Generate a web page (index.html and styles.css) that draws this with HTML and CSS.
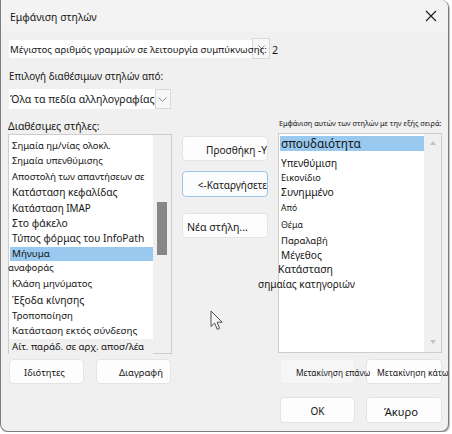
FILE: index.html
```html
<!DOCTYPE html>
<html lang="el">
<head>
<meta charset="utf-8">
<title>Εμφάνιση στηλών</title>
<link rel="stylesheet" href="styles.css">
</head>
<body>
<div class="window">
  <header class="titlebar">
    <span class="title">Εμφάνιση στηλών</span>
    <svg class="close" width="12" height="12" viewBox="0 0 12 12"><path d="M1 1L11 11M11 1L1 11" stroke="#1a1a1a" stroke-width="1.1"/></svg>
  </header>
  <main class="content">
    <div class="maxrow">
      <span class="maxlabel">Μέγιστος αριθμός γραμμών σε λειτουργία συμπύκνωσης:</span>
      <span class="spin"><svg width="7" height="7" viewBox="0 0 7 7"><path d="M0.5 0.5L3.5 3.5L6.5 0.5M3.5 3.5V7" stroke="#9088a8" fill="none"/></svg></span>
      <span class="maxval">2</span>
    </div>
    <div class="lbl-from">Επιλογή διαθέσιμων στηλών από:</div>
    <div class="dropdown">
      <span class="dd-text">Όλα τα πεδία αλληλογραφίας</span>
      <span class="dd-btn"><svg width="9" height="5" viewBox="0 0 9 5"><path d="M0.5 0.5L4.5 4.5L8.5 0.5" stroke="#8a8a8a" fill="none"/></svg></span>
    </div>
    <div class="columns">
      <div class="lbl-avail">Διαθέσιμες στήλες:</div>
      <div class="spacer"></div>
      <div class="lbl-show">Εμφάνιση αυτών των στηλών με την εξής σειρά:</div>

      <div class="listbox list-left">
        <ul class="items">
          <li class="item h150 fs95">Σημαία ημ/νίας ολοκλ.</li>
          <li class="item h160 fs94">Σημαία υπενθύμισης</li>
          <li class="item h155 fs94">Αποστολή των απαντήσεων σε</li>
          <li class="item h160 fs102">Κατάσταση κεφαλίδας</li>
          <li class="item h160 fs99">Κατάσταση IMAP</li>
          <li class="item h150 fs104">Στο φάκελο</li>
          <li class="item h155 fs102">Τύπος φόρμας του InfoPath</li>
          <li class="item h145 fs98 selected">Μήνυμα</li>
          <li class="item h145 fs96 outdent">αναφοράς</li>
          <li class="item h165 fs96">Κλάση μηνύματος</li>
          <li class="item h165 fs104">Έξοδα κίνησης</li>
          <li class="item h145 fs96">Τροποποίηση</li>
          <li class="item h160 fs98">Κατάσταση εκτός σύνδεσης</li>
          <li class="item h160 fs97 shaded">Αίτ. παράδ. σε αρχ. αποσ/λέα</li>
        </ul>
        <div class="vscroll"><div class="thumb"></div></div>
      </div>

      <div class="midbtns">
        <button class="btn btn-add fs101">Προσθήκη -Υ</button>
        <button class="btn btn-remove fs100">&lt;-Καταργήσετε</button>
        <button class="btn btn-new fs106">Νέα στήλη...</button>
      </div>

      <div class="listbox list-right">
        <ul class="items">
          <li class="item h150 fs118 selected">σπουδαιότητα</li>
          <li class="item h150 fs101 gap-first">Υπενθύμιση</li>
          <li class="item h145 fs92">Εικονίδιο</li>
          <li class="item h150 fs104">Συνημμένο</li>
          <li class="item h165 fs85">Από</li>
          <li class="item h160 fs88">Θέμα</li>
          <li class="item h150 fs95">Παραλαβή</li>
          <li class="item h140 fs101">Μέγεθος</li>
          <li class="item h145 fs105 outdent">Κατάσταση</li>
          <li class="item h160 fs100 overflow-left">σημαίας κατηγοριών</li>
        </ul>
        <div class="vscroll arrows"><span class="arrow up"></span><span class="arrow down"></span></div>
      </div>
    </div>

    <div class="btnrow">
      <div class="btngroup left-group">
        <button class="btn btn-props fs94">Ιδιότητες</button>
        <button class="btn btn-del fs95">Διαγραφή</button>
      </div>
      <div class="btngroup">
        <button class="btn btn-up fs83"><span class="btn-label">Μετακίνηση επάνω</span></button>
        <button class="btn btn-down fs86">Μετακίνηση κάτω</button>
      </div>
    </div>
    <div class="btnrow okrow">
      <div class="btngroup">
        <button class="btn btn-ok fs100">OK</button>
        <button class="btn btn-cancel fs112">Άκυρο</button>
      </div>
    </div>
  </main>
  <svg class="cursor" width="14" height="21" viewBox="0 0 14 21"><path d="M1 1V16.5L4.6 13L7.2 19.3L9.6 18.3L7.1 12.2H12.2Z" fill="#f6f6f6" stroke="#4e4e4e" stroke-width="1" stroke-linejoin="round"/></svg>
</div>
</body>
</html>
```
FILE: styles.css
```css
* { box-sizing: border-box; margin: 0; padding: 0; }
html, body { background: #ffffff; }
body {
  margin: 0;
  font-family: "Noto Sans", "Segoe UI", "Liberation Sans", sans-serif;
  color: #161616;
  font-size: 10px;
}

.window {
  position: relative;
  width: 449px;
  height: 432px;
  background: #f0f0f0;
  border: 1px solid #7d7d7d;
  border-top: none;
  border-radius: 0 8px 8px 8px;
  box-shadow: 1px 1px 1px rgba(0, 0, 0, 0.25);
}

.titlebar {
  height: 31px;
  background: #f3f3f3;
  border-radius: 0 8px 0 0;
  display: flex;
  align-items: center;
  justify-content: space-between;
  padding: 0 11px 0 9px;
}
.title { font-size: 10.4px; padding-top: 2px; }
.close { display: block; margin-top: 1px; }

.content { padding: 0 6px 0 7px; }

/* row with maximum lines */
.maxrow {
  margin-top: 7px;
  height: 21px;
  display: flex;
  align-items: center;
}
.maxlabel {
  position: relative;
  z-index: 1;
  margin-left: 1px;
  width: 243px;
  height: 18px;
  line-height: 20px;
  background: #ffffff;
  padding-left: 1px;
  white-space: nowrap;
  font-size: 9.6px;
}
.spin {
  width: 18px;
  height: 21px;
  border: 1px solid #d8d8d8;
  background: #f7f7f7;
  display: flex;
  align-items: center;
  justify-content: center;
}
.maxval { margin-left: 2px; padding-top: 2px; font-size: 10.6px; }

.lbl-from {
  margin-top: 9px;
  line-height: 17px;
  height: 16px;
  margin-left: 1px;
  font-size: 9.9px;
}

.dropdown {
  margin-top: 5px;
  width: 163px;
  height: 20px;
  display: flex;
}
.dd-text {
  flex: 1;
  background: #ffffff;
  margin-left: 1px;
  padding-left: 1px;
  line-height: 20px;
  white-space: nowrap;
  font-size: 10.5px;
}
.dd-btn {
  width: 17px;
  border: 1px solid #d8d8d8;
  background: #f7f7f7;
  display: flex;
  align-items: center;
  justify-content: center;
}

/* main columns */
.columns {
  margin-top: 8px;
  display: grid;
  grid-template-columns: 164px 86px 164px;
  grid-template-rows: 16px 221px;
  column-gap: 10px;
}
.lbl-avail {
  align-self: end;
  line-height: 14px;
  font-size: 10.4px;
}
.lbl-show {
  align-self: start;
  margin-top: 1px;
  margin-left: 1px;
  line-height: 10px;
  font-size: 7.3px;
  white-space: nowrap;
}

.listbox {
  height: 220px;
  background: #ffffff;
  border: 1px solid #cdcdcd;
  display: flex;
}
.list-left { margin-top: 1px; }

.items {
  list-style: none;
  flex: 1;
  min-width: 0;
}
.list-left .items { padding-top: 2.5px; }
.list-right .items { padding-top: 2px; }

.item {
  padding-left: 3px;
  white-space: nowrap;
}
.list-right .item { padding-left: 2px; }
.gap-first { margin-top: 4.5px; }
.selected { background: #99c9ef; margin-left: 1px; padding-left: 2px; }
.list-right .selected { padding-left: 1px; }
.outdent { margin-left: -1px; padding-left: 0; }
.list-right .outdent { margin-left: -1px; padding-left: 0; }
.list-right .overflow-left { margin-left: -21px; padding-left: 0; }
.shaded { background: #f0f0f0; }

/* row heights */
.h140 { height: 14px; line-height: 14px; }
.h145 { height: 14.5px; line-height: 14.5px; }
.h150 { height: 15px; line-height: 15px; }
.h155 { height: 15.5px; line-height: 15.5px; }
.h160 { height: 16px; line-height: 16px; }
.h165 { height: 16.5px; line-height: 16.5px; }

.vscroll {
  width: 18px;
  background: #f0f0f0;
  padding-top: 67px;
}
.thumb {
  width: 10px;
  height: 53px;
  margin-left: 4px;
  background: #878787;
}
.vscroll.arrows {
  width: 17px;
  padding: 7px 0 8px;
  display: flex;
  flex-direction: column;
  align-items: center;
  justify-content: space-between;
}
.arrow { width: 0; height: 0; border-left: 3.5px solid transparent; border-right: 3.5px solid transparent; }
.arrow.up { border-bottom: 4px solid #c2c2c2; }
.arrow.down { border-top: 4px solid #c2c2c2; }

/* buttons */
.btn {
  font-family: inherit;
  color: #161616;
  background: #fdfdfd;
  border: 1px solid #e4e4e4;
  border-radius: 4px;
  height: 25px;
  display: flex;
  align-items: center;
  white-space: nowrap;
  padding: 2px 0 0;
  overflow: visible;
}
.midbtns { display: flex; flex-direction: column; padding-top: 3px; }
.btn-add { justify-content: flex-end; padding-right: 0; }
.btn-remove { margin-top: 10px; height: 26px; justify-content: flex-end; border-color: #9cc3e8; background: #fbfcfd; }
.btn-new { margin-top: 16px; justify-content: flex-start; padding-left: 4px; }

.btnrow {
  margin-top: 5px;
  display: flex;
  justify-content: space-between;
}
.okrow { margin-top: 13px; justify-content: flex-end; }
.btngroup { display: flex; gap: 11px; }
.left-group { margin-left: 1px; gap: 12px; }
.btngroup .btn { width: 75px; }
.btn-props { padding-left: 14px; }
.btn-del { justify-content: flex-end; padding-right: 7px; }
.btn-up { padding-left: 15px; background: #f6f6f6; border-color: #efefef; }
.btn-label { position: relative; z-index: 1; }
.btngroup .btn-down { width: 76px; padding-left: 10px; }
.btn-ok, .btn-cancel { height: 26px; justify-content: center; }
.btngroup .btn-cancel { width: 76px; padding-right: 6px; }

.cursor { position: absolute; left: 209px; top: 310px; }

/* font sizes */
.fs83 { font-size: 8.3px; }
.fs85 { font-size: 8.5px; }
.fs86 { font-size: 8.6px; }
.fs88 { font-size: 8.8px; }
.fs92 { font-size: 9.2px; }
.fs94 { font-size: 9.4px; }
.fs95 { font-size: 9.5px; }
.fs96 { font-size: 9.6px; }
.fs97 { font-size: 9.7px; }
.fs98 { font-size: 9.8px; }
.fs99 { font-size: 9.9px; }
.fs100 { font-size: 10px; }
.fs101 { font-size: 10.1px; }
.fs102 { font-size: 10.2px; }
.fs104 { font-size: 10.4px; }
.fs105 { font-size: 10.5px; }
.fs106 { font-size: 10.6px; }
.fs112 { font-size: 11.2px; }
.fs118 { font-size: 11.8px; }
```
